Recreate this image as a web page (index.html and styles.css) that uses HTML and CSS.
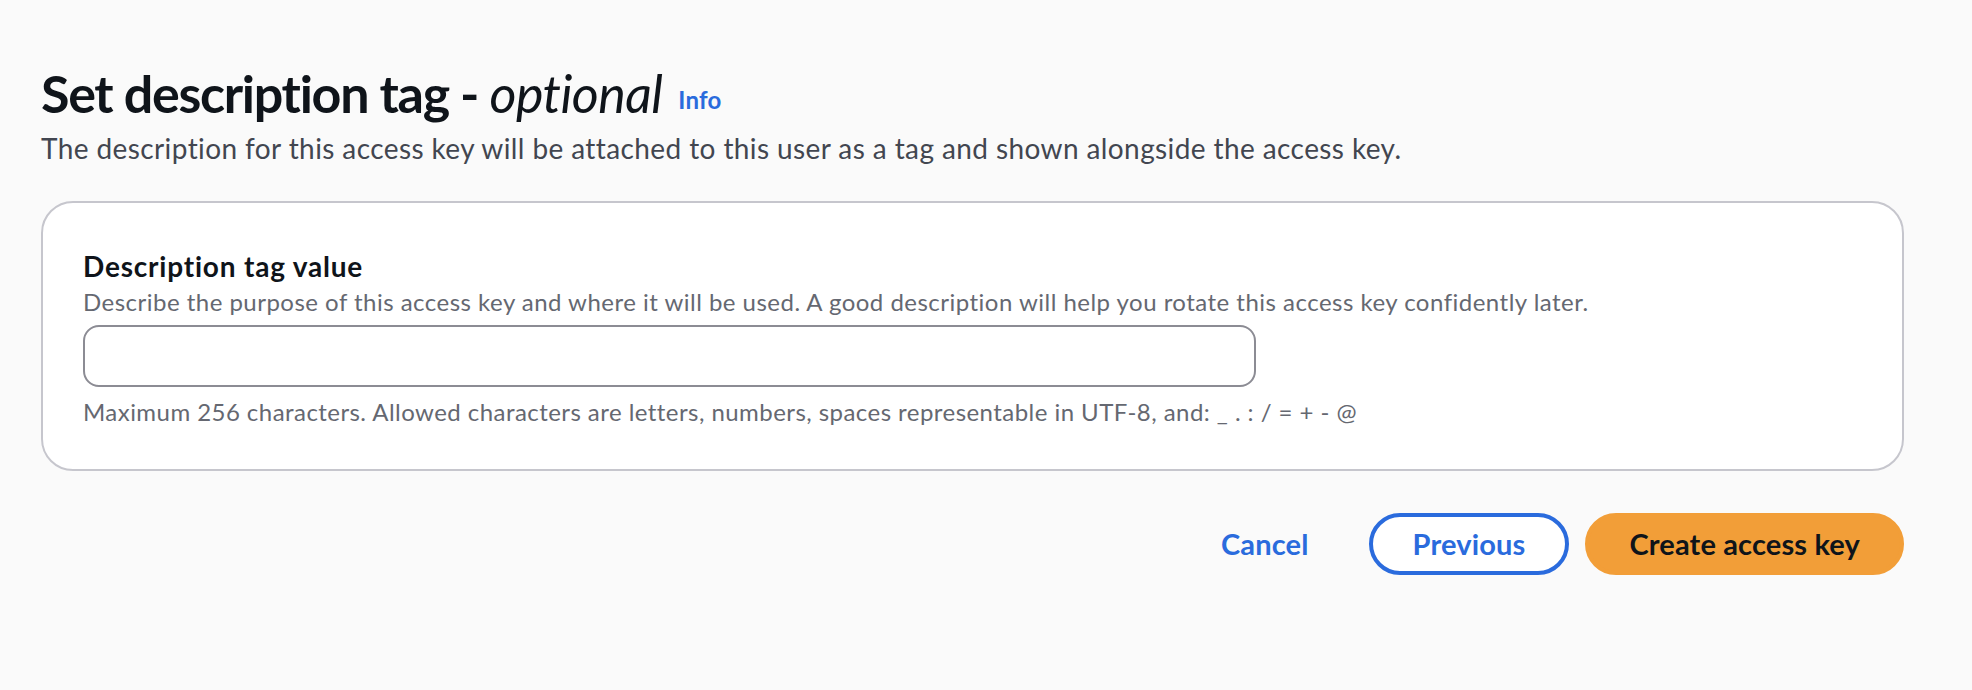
FILE: index.html
```html
<!DOCTYPE html>
<html lang="en">
<head>
<meta charset="utf-8">
<title>Set description tag</title>
<link rel="stylesheet" href="styles.css">
</head>
<body>
<main class="page">
  <header class="header">
    <h1 class="title">Set description tag - <i class="optional">optional</i><a class="info" href="#">Info</a></h1>
    <p class="subtitle">The description for this access key will be attached to this user as a tag and shown alongside the access key.</p>
  </header>
  <section class="card">
    <label class="label" for="desc">Description tag value</label>
    <p class="desc">Describe the purpose of this access key and where it will be used. A good description will help you rotate this access key confidently later.</p>
    <input class="input" id="desc" type="text">
    <p class="constraint">Maximum 256 characters. Allowed characters are letters, numbers, spaces representable in UTF-8, and: _ . : / = + - @</p>
  </section>
  <div class="actions">
    <button class="btn btn-link" type="button">Cancel</button>
    <button class="btn btn-normal" type="button">Previous</button>
    <button class="btn btn-primary" type="button">Create access key</button>
  </div>
</main>
</body>
</html>
```

FILE: styles.css
```css
html, body {
  margin: 0;
  padding: 0;
  background: #fafafa;
}

body {
  font-family: Lato, "Open Sans", sans-serif;
  color: #0f141a;
}

.page {
  padding: 68px 68px 0 41px;
}

.header {
  margin-bottom: 33px;
}

.title {
  margin: 0;
  font-size: 52px;
  line-height: 50px;
  font-weight: 700;
  letter-spacing: -1.3px;
  color: #0f141a;
}

.optional {
  font-weight: 400;
  font-style: italic;
  letter-spacing: -0.6px;
}

.info {
  margin-left: 16px;
  font-size: 24px;
  font-weight: 700;
  letter-spacing: 0.2px;
  color: #2a6bdd;
  text-decoration: none;
  vertical-align: 4px;
}

.subtitle {
  margin: 3px 0 0;
  font-size: 28px;
  line-height: 40px;
  letter-spacing: 0.4px;
  color: #424650;
}

.card {
  background: #ffffff;
  border: 2px solid #c6c6cd;
  border-radius: 32px;
  padding: 45px 40px 39px;
  display: flex;
  flex-direction: column;
  align-items: flex-start;
}

.label {
  display: block;
  font-size: 28px;
  line-height: 36px;
  font-weight: 700;
  letter-spacing: 0.8px;
  color: #0f141a;
}

.desc {
  margin: 0;
  font-size: 24px;
  line-height: 36px;
  letter-spacing: 0.48px;
  color: #656871;
}

.input {
  margin-top: 5px;
  box-sizing: border-box;
  width: 1173px;
  height: 62px;
  border: 2px solid #8c8c94;
  border-radius: 16px;
  background: #ffffff;
  padding: 0 20px;
  font: inherit;
  font-size: 26px;
}

.constraint {
  margin: 7px 0 0;
  font-size: 24px;
  line-height: 36px;
  letter-spacing: 0.45px;
  color: #656871;
}

.actions {
  margin-top: 42px;
  display: flex;
  justify-content: flex-end;
  gap: 16px;
}

.btn {
  font-family: inherit;
  font-size: 29px;
  font-weight: 700;
  line-height: 38px;
  letter-spacing: 0.15px;
  padding: 8px 40px;
  border: 4px solid transparent;
  border-radius: 40px;
  cursor: pointer;
}

.btn-link {
  background: transparent;
  color: #2a6bdd;
}

.btn-normal {
  background: #ffffff;
  border-color: #2a6bdd;
  color: #2a6bdd;
}

.btn-primary {
  background: #f29e38;
  border-color: #f29e38;
  color: #0f141a;
}
```
